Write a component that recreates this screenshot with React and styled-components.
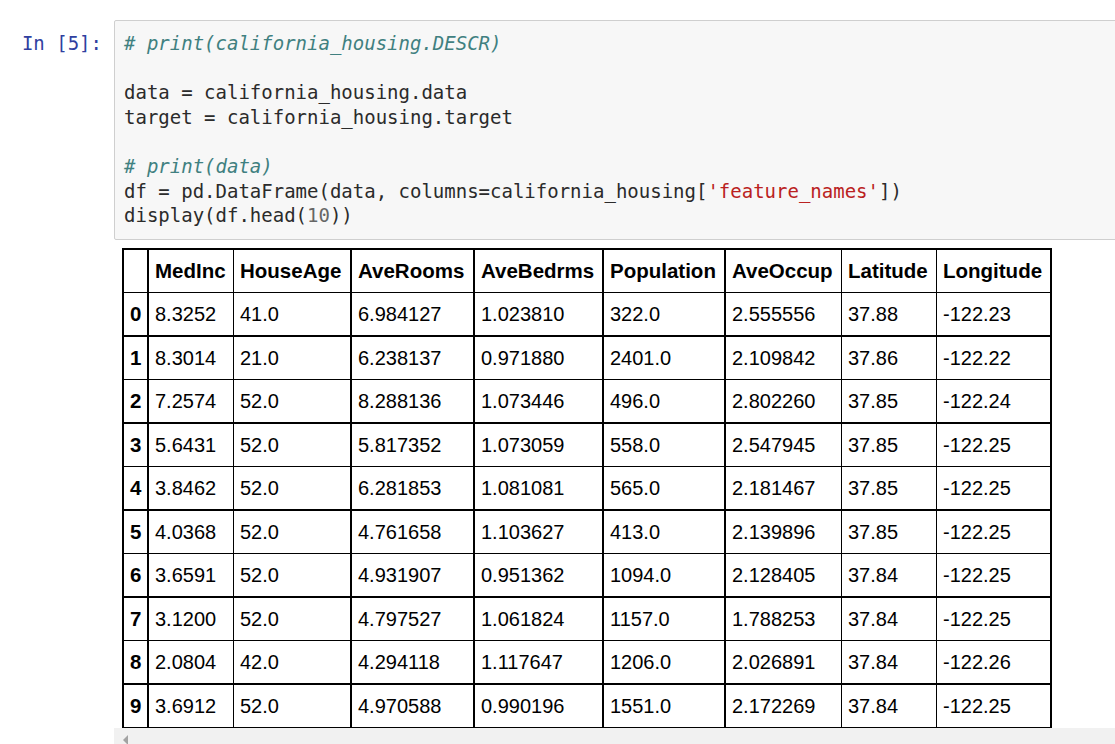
import React from "react";
import styled, { createGlobalStyle } from "styled-components";

const GlobalStyle = createGlobalStyle`
  html, body {
    margin: 0;
    padding: 0;
    background: #fff;
    overflow: hidden;
  }
`;

const Notebook = styled.div`
  padding-top: 20px;
`;

const InputRow = styled.div`
  display: flex;
  align-items: flex-start;
`;

const Prompt = styled.div`
  flex: 0 0 114px;
  box-sizing: border-box;
  padding: 11px 12px 0 0;
  text-align: right;
  font-family: "DejaVu Sans Mono", "Liberation Mono", monospace;
  font-size: 19px;
  line-height: 24.6px;
  color: #303f9f;
  white-space: pre;
`;

const CodeCell = styled.div`
  flex: 1;
  margin-right: -20px;
  padding: 10px 9px 11px;
  background: #f7f7f7;
  border: 1px solid #cfcfcf;
  border-radius: 2px;
  font-family: "DejaVu Sans Mono", "Liberation Mono", monospace;
  font-size: 19px;
  color: #2b2b2b;
`;

const CodeLine = styled.div`
  height: 24.6px;
  line-height: 24.6px;
  white-space: pre;
`;

const Comment = styled.span`
  color: #408080;
  font-style: italic;
`;

const Str = styled.span`
  color: #ba2121;
`;

const Num = styled.span`
  color: #666;
`;

const OutputArea = styled.div`
  margin: 8px -20px 0 114px;
  background: #fff;
`;

const Scroller = styled.div`
  padding-left: 8px;
`;

const DataFrame = styled.div`
  display: grid;
  grid-template-columns: 25px 85px 118px 123px 129px 122px 116px 95px 115px;
  grid-template-rows: 43px repeat(5, 44px 43px);
  width: max-content;
  border-top: 2px solid #000;
  border-left: 2px solid #000;
  font-family: "Liberation Sans", Arial, sans-serif;
  font-size: 20px;
  color: #000;
`;

const Cell = styled.div`
  box-sizing: border-box;
  display: flex;
  align-items: center;
  padding: 1px 6px 0;
  white-space: nowrap;
  border-right: ${(p) => p.$rw}px solid #000;
  border-bottom: ${(p) => p.$bw}px solid #000;
  font-weight: ${(p) => (p.$bold ? 700 : 400)};
  font-size: ${(p) => (p.$bold ? "20.5px" : "20px")};
`;

const ScrollBar = styled.div`
  position: relative;
  height: 17px;
  background: #f1f1f1;
`;

const ArrowLeft = styled.div`
  position: absolute;
  left: 9px;
  top: 7px;
  width: 0;
  height: 0;
  border-top: 5px solid transparent;
  border-bottom: 5px solid transparent;
  border-right: 5px solid #a3a3a3;
`;

const columns = [
  "MedInc",
  "HouseAge",
  "AveRooms",
  "AveBedrms",
  "Population",
  "AveOccup",
  "Latitude",
  "Longitude",
];

// right-hand line widths of each column, index column first
const lineWidths = [2, 1, 2, 2, 2, 2, 1, 1, 2];

const rows = [
  ["8.3252", "41.0", "6.984127", "1.023810", "322.0", "2.555556", "37.88", "-122.23"],
  ["8.3014", "21.0", "6.238137", "0.971880", "2401.0", "2.109842", "37.86", "-122.22"],
  ["7.2574", "52.0", "8.288136", "1.073446", "496.0", "2.802260", "37.85", "-122.24"],
  ["5.6431", "52.0", "5.817352", "1.073059", "558.0", "2.547945", "37.85", "-122.25"],
  ["3.8462", "52.0", "6.281853", "1.081081", "565.0", "2.181467", "37.85", "-122.25"],
  ["4.0368", "52.0", "4.761658", "1.103627", "413.0", "2.139896", "37.85", "-122.25"],
  ["3.6591", "52.0", "4.931907", "0.951362", "1094.0", "2.128405", "37.84", "-122.25"],
  ["3.1200", "52.0", "4.797527", "1.061824", "1157.0", "1.788253", "37.84", "-122.25"],
  ["2.0804", "42.0", "4.294118", "1.117647", "1206.0", "2.026891", "37.84", "-122.26"],
  ["3.6912", "52.0", "4.970588", "0.990196", "1551.0", "2.172269", "37.84", "-122.25"],
];

const App = () => {
  return (
    <Notebook>
      <GlobalStyle />
      <InputRow>
        <Prompt>In [5]:</Prompt>
        <CodeCell>
          <CodeLine>
            <Comment># print(california_housing.DESCR)</Comment>
          </CodeLine>
          <CodeLine> </CodeLine>
          <CodeLine>data = california_housing.data</CodeLine>
          <CodeLine>target = california_housing.target</CodeLine>
          <CodeLine> </CodeLine>
          <CodeLine>
            <Comment># print(data)</Comment>
          </CodeLine>
          <CodeLine>
            df = pd.DataFrame(data, columns=california_housing[
            <Str>'feature_names'</Str>])
          </CodeLine>
          <CodeLine>
            display(df.head(<Num>10</Num>))
          </CodeLine>
        </CodeCell>
      </InputRow>
      <OutputArea>
        <Scroller>
          <DataFrame>
            <Cell $rw={lineWidths[0]} $bw={1} $bold />
            {columns.map((name, i) => (
              <Cell key={name} $rw={lineWidths[i + 1]} $bw={1} $bold>
                {name}
              </Cell>
            ))}
            {rows.map((row, r) => {
              const bw = r % 2 === 0 ? 2 : 1;
              return (
                <React.Fragment key={r}>
                  <Cell $rw={lineWidths[0]} $bw={bw} $bold>
                    {r}
                  </Cell>
                  {row.map((v, c) => (
                    <Cell key={c} $rw={lineWidths[c + 1]} $bw={bw}>
                      {v}
                    </Cell>
                  ))}
                </React.Fragment>
              );
            })}
          </DataFrame>
        </Scroller>
        <ScrollBar>
          <ArrowLeft />
        </ScrollBar>
      </OutputArea>
    </Notebook>
  );
};

export default App;
